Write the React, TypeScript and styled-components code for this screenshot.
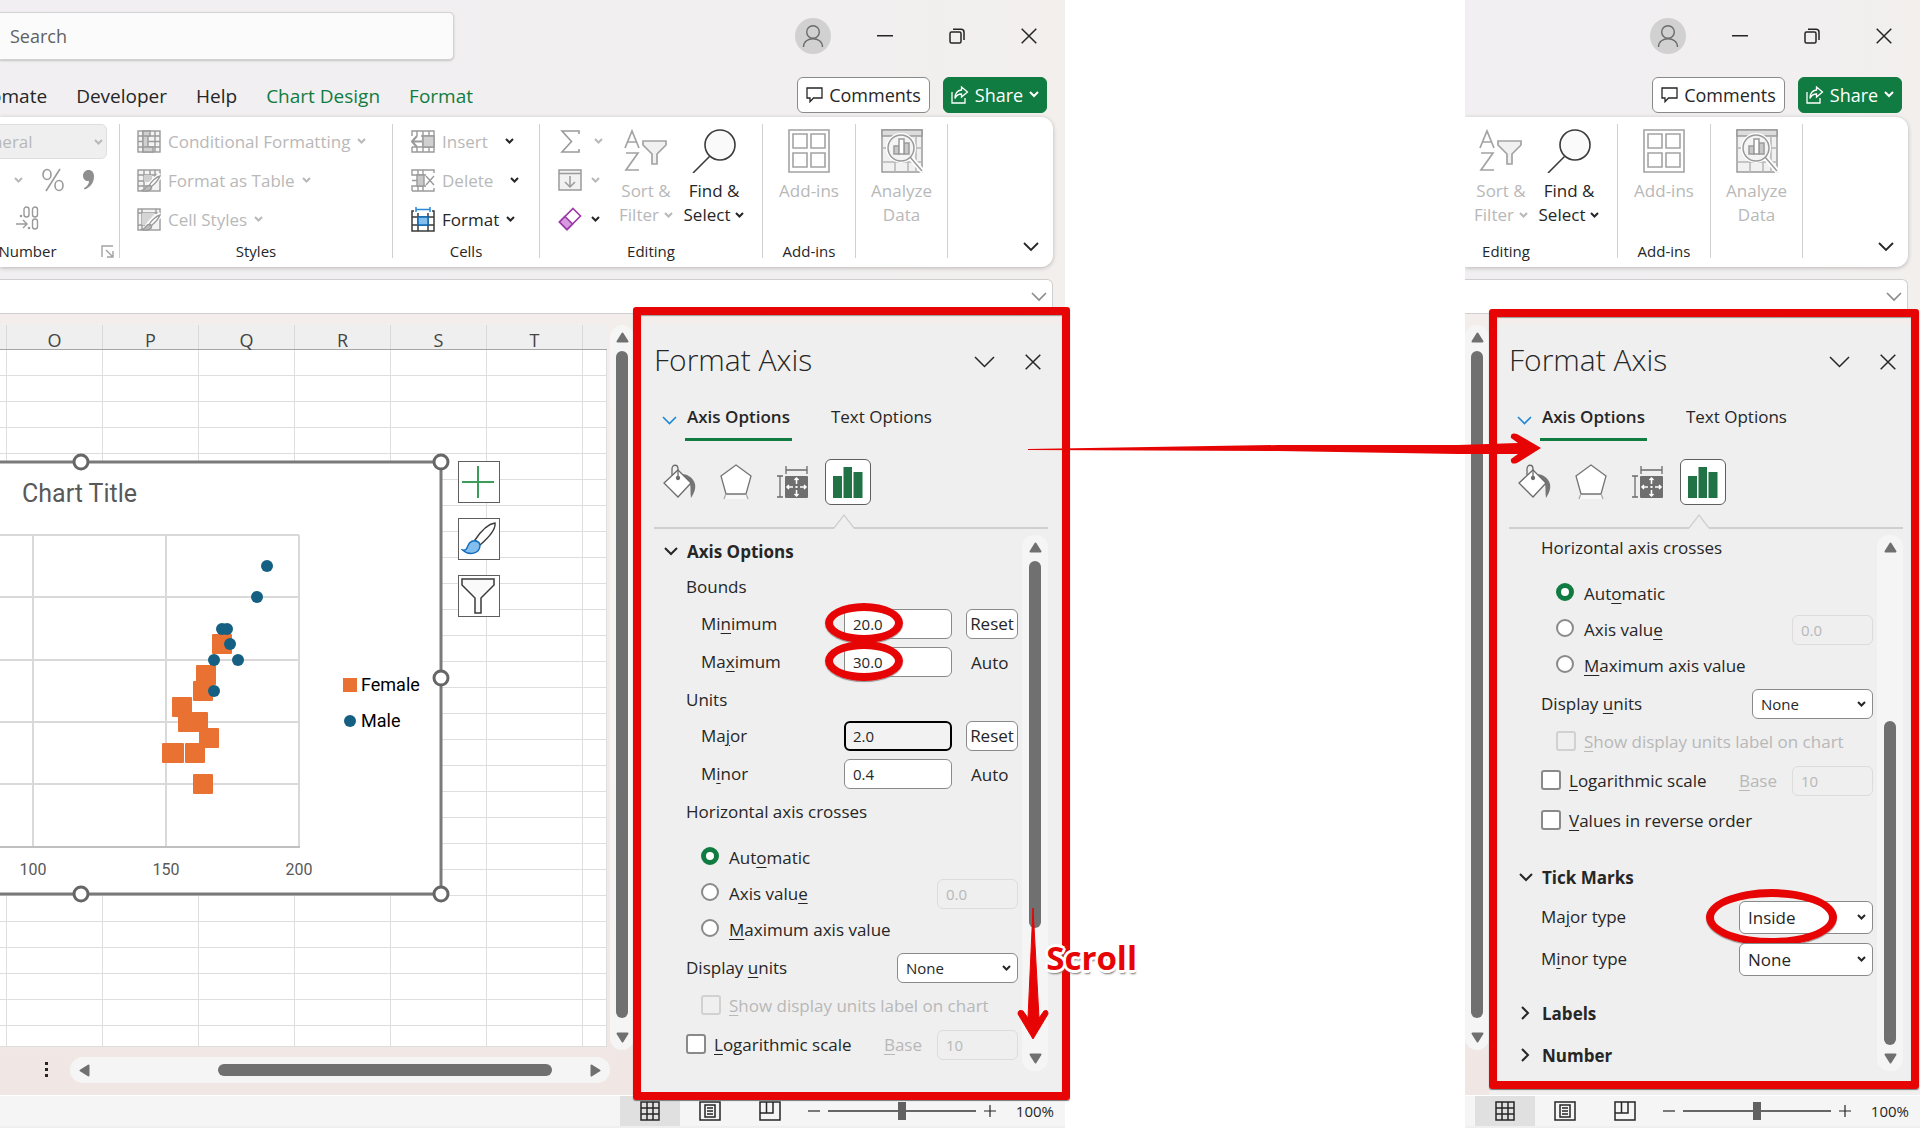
import React, { useId } from "react";
import styled, { createGlobalStyle, css } from "styled-components";

const UI_FONT = '"Open Sans", "Noto Sans", sans-serif';
const CHART_FONT = 'Roboto, "Open Sans", sans-serif';

const INK = "#262626";
const MUTED = "#b8b8b8";
const GREEN = "#107c41";
const RED = "#e60404";
const THUMB = "#707070";

const GlobalStyle = createGlobalStyle`
  * { box-sizing: border-box; }
  body {
    margin: 0;
    background: #fff;
    color: ${INK};
    font-family: ${UI_FONT};
    font-size: 17px;
  }
  button, input, select { font-family: inherit; color: inherit; }
  button { padding: 0; border: 0; background: none; }
  svg { display: block; flex: none; }
`;

/* ---------- page ---------- */

const Page = styled.main`
  position: relative;
  display: grid;
  grid-template-columns: 1065fr 400fr 455fr 3fr;
  min-height: 100vh;
  overflow: hidden;
`;

const WindowCell = styled.div<{ $col: number }>`
  grid-column: ${(p) => p.$col};
  position: relative;
  min-width: 0;
`;

const WindowBody = styled.section`
  display: flex;
  flex-direction: column;
  height: 100%;
  overflow: hidden;
  background: linear-gradient(90deg, #f1eff1 0%, #f1eff0 75%, #f2efed 100%);
`;

/* ---------- title bar ---------- */

const TitleBar = styled.header`
  display: flex;
  align-items: center;
  justify-content: space-between;
  height: 72px;
`;

const SearchBox = styled.input`
  flex: 0 0 454px;
  height: 48px;
  padding: 0 10px;
  font-size: 18px;
  background: #fbfbfb;
  border: 1px solid #d2d2d2;
  border-left: 0;
  border-radius: 0 5px 5px 0;
  box-shadow: 0 1px 2px #c4c4c4;
  &::placeholder { color: #616161; opacity: 1; }
`;

const WindowButtons = styled.div`
  display: flex;
  margin-left: auto;
`;

const WindowButton = styled.button`
  display: grid;
  place-items: center;
  width: 72px;
  height: 72px;
`;

/* ---------- tabs ---------- */

const TabRow = styled.div`
  display: flex;
  align-items: center;
  justify-content: space-between;
  height: 45px;
  padding-right: 18px;
`;

const Tabs = styled.nav`
  display: flex;
  justify-content: flex-end;
  gap: 29px;
  flex: 0 0 473px;
  padding-top: 2px;
  overflow: hidden;
`;

const TabLink = styled.a<{ $accent?: boolean }>`
  font-size: 19px;
  line-height: 28px;
  white-space: nowrap;
  text-decoration: none;
  color: ${(p) => (p.$accent ? GREEN : INK)};
`;

const TabActions = styled.div`
  display: flex;
  gap: 13px;
  margin-left: auto;
`;

const ActionButton = styled.button<{ $primary?: boolean }>`
  display: flex;
  align-items: center;
  justify-content: center;
  gap: 6px;
  width: ${(p) => (p.$primary ? 104 : 133)}px;
  height: 36px;
  font-size: 18px;
  color: ${(p) => (p.$primary ? "#fff" : INK)};
  background: ${(p) => (p.$primary ? GREEN : "#fff")};
  border: 1px solid ${(p) => (p.$primary ? GREEN : "#8a8a8a")};
  border-radius: 6px;
`;

/* ---------- ribbon ---------- */

const Ribbon = styled.div`
  position: relative;
  display: flex;
  justify-content: flex-end;
  height: 150px;
  margin-right: 12px;
  padding: 7px 105px 9px 0;
  background: #fff;
  border-radius: 0 12px 12px 0;
  box-shadow: 0 1px 4px #b9b5b3;
`;

const Group = styled.div<{ $w: number }>`
  position: relative;
  display: flex;
  flex-direction: column;
  flex: 0 0 ${(p) => p.$w}px;
  border-right: 1px solid #d1d1d1;
`;

const GroupBody = styled.div<{ $pad?: string }>`
  display: flex;
  flex: 1;
  padding: ${(p) => p.$pad ?? "0"};
`;

const GroupLabel = styled.div`
  font-size: 15px;
  line-height: 14px;
  height: 14px;
  text-align: center;
`;

const Stack = styled.div<{ $align?: string }>`
  display: flex;
  flex-direction: column;
  flex: 1;
  gap: 5px;
  align-items: ${(p) => p.$align ?? "stretch"};
`;

const RibbonRow = styled.div<{ $pad?: number; $gap?: number }>`
  display: flex;
  align-items: center;
  gap: ${(p) => p.$gap ?? 7}px;
  height: 34px;
  padding-right: ${(p) => p.$pad ?? 0}px;
`;

const Command = styled.button<{ $muted?: boolean; $gap?: number }>`
  display: flex;
  align-items: center;
  gap: ${(p) => p.$gap ?? 7}px;
  height: 34px;
  font-size: 17px;
  white-space: nowrap;
  color: ${(p) => (p.$muted ? MUTED : INK)};
`;

const BigCommand = styled.button<{ $muted?: boolean; $w: number }>`
  display: flex;
  flex-direction: column;
  align-items: center;
  flex: none;
  width: ${(p) => p.$w}px;
  padding-top: 5px;
  font-size: 17px;
  line-height: 24px;
  color: ${(p) => (p.$muted ? MUTED : INK)};
  & > svg { margin-bottom: 6px; }
`;

const CaptionLine = styled.span`
  display: flex;
  align-items: center;
  gap: 5px;
  white-space: nowrap;
`;

const FormatPicker = styled.div`
  position: relative;
  flex: none;
  width: 160px;
  color: ${MUTED};
  & > svg { position: absolute; right: 4px; top: 15px; }
`;

const FormatSelect = styled.select`
  display: block;
  width: 100%;
  height: 35px;
  padding: 0 0 0 22px;
  appearance: none;
  font-size: 17px;
  color: ${MUTED};
  opacity: 1;
  background: #efefef;
  border: 1px solid #dedede;
  border-radius: 6px;
`;

const Launcher = styled.button`
  position: absolute;
  right: 5px;
  bottom: 0;
`;

const CollapseButton = styled.button`
  position: absolute;
  right: 14px;
  bottom: 15px;
`;

const FormulaBar = styled.div`
  display: flex;
  align-items: center;
  height: 35px;
  margin: 12px 12px 0 0;
  padding-right: 5px;
  color: #8c8c8c;
  background: #fff;
  border: 1px solid #cfcfcf;
  border-left: 0;
  border-radius: 0 6px 0 0;
`;

const FormulaInput = styled.input`
  flex: 1;
  min-width: 0;
  border: 0;
  background: none;
`;

/* ---------- sheet ---------- */

const Workspace = styled.div`
  display: flex;
  flex: 1;
  min-height: 0;
  padding-top: 11px;
  background: linear-gradient(#f3eeeb 0, #f0e7e5 100%);
`;

const SheetArea = styled.div`
  display: flex;
  flex-direction: column;
  flex: 1;
  min-width: 0;
`;

const SheetTop = styled.div`
  display: flex;
  flex: 1;
  min-height: 0;
`;

const Sheet = styled.div`
  display: flex;
  flex-direction: column;
  flex: 1;
  min-width: 0;
  margin: 0 3px 3px 0;
  overflow: hidden;
`;

const ColumnHeads = styled.div`
  display: flex;
  height: 25px;
  padding-left: 6px;
  background: #efefef;
  border-bottom: 1px solid #a6a6a6;
`;

const ColumnHead = styled.div`
  flex: 0 0 96px;
  border-left: 1px solid #d9d9d9;
  color: #444;
  font-size: 18px;
  line-height: 30px;
  text-align: center;
`;

const Cells = styled.div`
  position: relative;
  flex: 1;
  border: solid #dedede;
  border-width: 0 1px 1px 0;
  background-color: #fff;
  background-image: linear-gradient(90deg, #dedede 1px, transparent 1px),
    linear-gradient(transparent 25px, #dedede 25px);
  background-size: 96px 26px;
  background-position: 6px 0;
`;

const ChartFloat = styled.div`
  position: absolute;
  left: 0;
  top: 103px;
`;

const ChartTools = styled.div`
  position: absolute;
  left: 458px;
  top: 111px;
  display: flex;
  flex-direction: column;
  gap: 15px;
`;

const ChartTool = styled.button`
  display: grid;
  place-items: center;
  width: 42px;
  height: 42px;
  background: #fff;
  border: 1px solid #5e5e5e;
`;

const VTrack = styled.div<{ $w: number; $inset?: boolean }>`
  display: flex;
  flex-direction: column;
  align-items: center;
  flex: 0 0 ${(p) => p.$w}px;
  margin: ${(p) => (p.$inset ? "6px 0" : "0")};
  padding: 7px 0;
  gap: 8px;
  background: #f5f5f5;
  border-radius: 12px;
`;

const VRail = styled.div<{ $before: number; $after: number }>`
  display: flex;
  flex: 1;
  width: 12px;
  padding: ${(p) => p.$before}px 0 ${(p) => p.$after}px;
`;

const Thumb = styled.div`
  flex: 1;
  border-radius: 6px;
  background: ${THUMB};
`;

const SheetBottom = styled.div`
  display: flex;
  align-items: flex-start;
  height: 45px;
  padding-top: 7px;
`;

const HTrack = styled.div`
  display: flex;
  align-items: center;
  flex: 1;
  height: 26px;
  margin: 0 24px 0 18px;
  padding: 0 8px;
  background: #f5f5f5;
  border-radius: 13px;
`;

const HRail = styled.div`
  display: flex;
  flex: 1;
  height: 12px;
  padding: 0 37px 0 127px;
`;

const MoreButton = styled.button`
  margin: 5px 0 0 42px;
  padding: 0 3px;
`;

/* ---------- status bar ---------- */

const StatusBar = styled.footer`
  display: flex;
  justify-content: flex-end;
  align-items: center;
  height: 33px;
  padding-right: 11px;
  background: #f5f5f5;
  border-top: 1px solid #fff;
  border-bottom: 2px solid #f1eeee;
`;

const ViewButton = styled.button<{ $active?: boolean }>`
  display: grid;
  place-items: center;
  flex: none;
  width: 60px;
  height: 30px;
  background: ${(p) => (p.$active ? "#e0e0e0" : "transparent")};
`;

const ZoomButton = styled.button`
  margin: 0 8px;
`;

const ZoomSlider = styled.input`
  width: 148px;
  height: 18px;
  margin: 0;
  appearance: none;
  background: linear-gradient(#666, #666) center / 100% 2px no-repeat;
  &::-webkit-slider-thumb {
    appearance: none;
    width: 8px;
    height: 18px;
    background: #616161;
  }
`;

const ZoomValue = styled.span`
  width: 50px;
  text-align: right;
  font-size: 15px;
`;

/* ---------- format pane ---------- */

const Pane = styled.aside`
  display: flex;
  flex-direction: column;
  flex: 0 0 431px;
  background: #efefef;
  padding: 0 17px 18px 20px;
`;

const PaneHeader = styled.div`
  display: flex;
  align-items: center;
  height: 70px;
  margin-right: -2px;
`;

const PaneTitle = styled.h2`
  flex: 1;
  margin: 0;
  font-size: 30px;
  font-weight: 300;
  line-height: 40px;
`;

const PaneHeadButton = styled.button`
  display: grid;
  place-items: center;
  width: 34px;
  height: 34px;
  margin: 4px 0 0 15px;
`;

const PaneTabs = styled.div`
  display: flex;
  align-items: center;
  height: 46px;
  padding-left: 8px;
  color: #1e88d6;
  & > svg { margin-top: 6px; }
`;

const PaneTab = styled.button<{ $active?: boolean }>`
  height: 46px;
  margin-left: ${(p) => (p.$active ? 8 : 37)}px;
  padding: 0 2px;
  font-size: 17px;
  font-weight: ${(p) => (p.$active ? 600 : 400)};
  color: ${INK};
  border-bottom: 3px solid ${(p) => (p.$active ? GREEN : "transparent")};
`;

const PaneIcons = styled.div`
  display: flex;
  gap: 10px;
  height: 86px;
  padding: 18px 0 0 3px;
`;

const PaneIcon = styled.button<{ $active?: boolean }>`
  display: grid;
  place-items: center;
  width: 46px;
  height: 46px;
  border: 1px solid ${(p) => (p.$active ? "#5e5e5e" : "transparent")};
  border-radius: 6px;
  background: ${(p) => (p.$active ? "#fff" : "none")};
`;

const Notch = styled.div`
  display: flex;
  height: 2px;
  align-items: flex-end;
  color: #cfcfcf;
  &::before, &::after { content: ""; height: 2px; background: #cfcfcf; }
  &::before { flex: 0 0 180px; }
  &::after { flex: 1; }
`;

const PaneScroll = styled.div`
  display: flex;
  flex: 1;
  min-height: 0;
`;

const Options = styled.form<{ $top: number }>`
  flex: 1;
  min-width: 0;
  padding: ${(p) => p.$top}px 4px 0 0;
`;

const Row = styled.div<{ $h?: number; $indent?: number; $top?: number; $muted?: boolean }>`
  display: flex;
  align-items: center;
  height: ${(p) => p.$h ?? 38}px;
  margin-top: ${(p) => p.$top ?? 0}px;
  padding-left: ${(p) => p.$indent ?? 32}px;
  color: ${(p) => (p.$muted ? MUTED : INK)};
`;

const Label = styled.label`
  flex: 1;
  line-height: 24px;
  white-space: nowrap;
  u { text-underline-offset: 3px; text-decoration-thickness: 1px; }
`;

const SectionButton = styled.button`
  display: flex;
  align-items: center;
  gap: 8px;
  font-size: 17px;
  font-weight: 700;
  & > span { width: 17px; display: grid; place-items: center; }
`;

const boxLook = css<{ disabled?: boolean }>`
  height: 30px;
  border: 1px solid ${(p) => (p.disabled ? "#dcdcdc" : "#8a8a8a")};
  border-radius: 6px;
  background: ${(p) => (p.disabled ? "transparent" : "#fff")};
  color: ${(p) => (p.disabled ? MUTED : INK)};
  opacity: 1;
`;

const Field = styled.div<{ $w: number }>`
  position: relative;
  flex: 0 0 ${(p) => p.$w}px;
  color: ${INK};
  & > svg { position: absolute; right: 7px; top: 50%; margin-top: -3px; }
`;

const TextInput = styled.input<{ $focused?: boolean }>`
  ${boxLook}
  display: block;
  width: 100%;
  padding: 0 8px;
  font-size: 15px;
  ${(p) => p.$focused && css`border: 2px solid #000; padding: 0 7px; background: #f3f2f2;`}
`;

const Select = styled.select<{ $large?: boolean }>`
  ${boxLook}
  display: block;
  width: 100%;
  height: ${(p) => (p.$large ? 33 : 30)}px;
  padding: 0 8px;
  appearance: none;
  font-size: ${(p) => (p.$large ? 17 : 15)}px;
`;

const Side = styled.div`
  flex: 0 0 52px;
  margin-left: 14px;
  padding-left: 5px;
`;

const ResetButton = styled.button`
  ${boxLook}
  flex: 0 0 52px;
  margin-left: 14px;
  font-size: 17px;
  line-height: 24px;
`;

const Radio = styled.input`
  appearance: none;
  flex: none;
  width: 18px;
  height: 18px;
  margin: 0 10px 4px 0;
  border: 2px solid #8a8a8a;
  border-radius: 50%;
  background: #fff;
  &:checked { border: 5px solid ${GREEN}; }
`;

const Check = styled.input`
  appearance: none;
  flex: none;
  width: 20px;
  height: 20px;
  margin: 0 8px 2px 0;
  border: 2px solid ${(p) => (p.disabled ? "#d1d1d1" : "#8a8a8a")};
  border-radius: 3px;
  background: ${(p) => (p.disabled ? "transparent" : "#fff")};
`;

/* ---------- annotations ---------- */

const Frame = styled.div<{ $tall?: boolean }>`
  position: absolute;
  right: ${(p) => (p.$tall ? -5 : 1)}px;
  width: ${(p) => (p.$tall ? 437 : 430)}px;
  top: ${(p) => (p.$tall ? 307 : 309)}px;
  bottom: ${(p) => (p.$tall ? 28 : 39)}px;
  border: 8px solid ${RED};
  border-radius: 3px;
  box-shadow: 0 1px 1px #777, inset 0 1px 1px #999;
  pointer-events: none;
`;

const Ring = styled.div<{ $wide?: boolean }>`
  position: absolute;
  left: ${(p) => (p.$wide ? -33 : -19)}px;
  top: ${(p) => (p.$wide ? -12 : -6)}px;
  width: ${(p) => (p.$wide ? 131 : 78)}px;
  height: ${(p) => (p.$wide ? 57 : 40)}px;
  border: 8px solid ${RED};
  border-radius: 50%;
  box-shadow: 0 1px 1px #888;
  pointer-events: none;
`;

const LongArrow = styled.svg`
  position: absolute;
  left: 1028px;
  top: 432px;
`;

const DownArrow = styled.svg`
  position: absolute;
  right: 16px;
  top: 908px;
`;

const ScrollNote = styled.div`
  position: absolute;
  right: -72px;
  top: 936px;
  font-size: 33px;
  line-height: 44px;
  font-weight: 700;
  color: ${RED};
  text-shadow: -2px -2px 0 #fff, 2px -2px 0 #fff, -2px 2px 0 #fff, 2px 2px 0 #fff,
    0 3px 0 #fff, 3px 0 0 #fff, -3px 0 0 #fff, 0 -3px 0 #fff, 1px 4px 2px #777;
`;

/* ---------- icons ---------- */

type ChevronProps = { w?: number; color?: string; thick?: number };
const Chevron = ({ w = 9, color = "currentColor", thick = 2 }: ChevronProps) => (
  <svg width={w} height={w / 2 + 2} viewBox={`0 0 ${w} ${w / 2 + 2}`} fill="none" stroke={color} strokeWidth={thick}>
    <path d={`M1 1 L${w / 2} ${w / 2} L${w - 1} 1`} />
  </svg>
);

const ChevronRight = () => (
  <svg width="9" height="14" fill="none" stroke={INK} strokeWidth="2">
    <path d="M1 1l6 6-6 6" />
  </svg>
);

const Cross = () => (
  <svg width="16" height="16" fill="none" stroke={INK} strokeWidth="1.5">
    <path d="M.7.7l14.6 14.6M15.3.7L.7 15.3" />
  </svg>
);

const Triangle = ({ dir }: { dir: "up" | "down" | "left" | "right" }) => {
  const turn = { up: 0, right: 90, down: 180, left: 270 }[dir];
  return (
    <svg width="13" height="11" viewBox="-6.5 -5.5 13 11" overflow="visible">
      <path d="M0-4L5 4H-5Z" fill={THUMB} stroke={THUMB} strokeWidth="2" strokeLinejoin="round" transform={`rotate(${turn})`} />
    </svg>
  );
};

const Avatar = () => (
  <svg width="36" height="36" fill="none" stroke="#6b6b6b" strokeWidth="1.4">
    <circle cx="18" cy="18" r="18" fill="#d1d1d1" stroke="none" />
    <circle cx="18" cy="14" r="6.3" />
    <path d="M8.500 29c0-11 19-11 19 0" />
  </svg>
);

const Restore = () => (
  <svg width="16" height="16" fill="none" stroke={INK} strokeWidth="1.5">
    <rect x="1" y="4" width="11" height="11" rx="1.500" />
    <path d="M4 1.300h8a3 3 0 013 3V12" />
  </svg>
);

const CommentIcon = () => (
  <svg width="17" height="16" fill="none" stroke={INK} strokeWidth="1.3">
    <path d="M1 1h15v10H7.500L4 14.700V11H1z" />
  </svg>
);

const ShareIcon = () => (
  <svg width="18" height="18" fill="none" stroke="#fff" strokeWidth="1.3">
    <path d="M1 6v11h13v-5M10.500 1l6 5-6 5V8C7 8 5 10 4 12.500 4 8 6 4.500 10.500 4z" />
  </svg>
);

const TableIcon = ({ kind }: { kind: "cond" | "table" | "cell" }) => (
  <svg width="24" height="23" fill="none" stroke="#9a9a9a" strokeWidth="1.400">
    <rect x="1" y="1" width="22" height="21" fill="#f3f3f3" />
    {kind === "cond" && (
      <>
        <path d="M1 6h22M1 11.500h22M1 17h22M6 1v21M18 1v21" />
        <path d="M6 1h7v5H6zM6 6h5v11H6zM6 17h10v5H6z" fill="#cfcfcf" />
      </>
    )}
    {kind === "table" && <path d="M1 6h22M1 12h14M1 17h10M7 1v21M13 1v14M18 1v9" />}
    {kind === "table" && <path d="M7 6h8v7H7z" fill="#cfcfcf" stroke="none" />}
    {kind === "cell" && (
      <>
        <path d="M1 5h22M5 1v21M1 17h7M19 1v5" />
        <path d="M5 5h13L8 17H5z" fill="#d5d5d5" stroke="none" />
      </>
    )}
    {kind !== "cond" && (
      <>
        <path d="M24 6L12 17" stroke="#fff" strokeWidth="6" />
        <path d="M23 7c-4 1-9 6-10.500 9l2 1.500C17.500 15 21.500 11 23 7z" fill="#fff" />
        <path d="M12 16.500c-3 0-3 4-7 5 4 1.500 10 0 9.500-3.500z" fill="#bdbdbd" />
      </>
    )}
  </svg>
);

const CellsIcon = ({ kind }: { kind: "insert" | "delete" | "format" }) => {
  if (kind === "format")
    return (
      <svg width="24" height="25" fill="none" stroke="#3b3b3b" strokeWidth="1.500">
        <path d="M3 4H1v20h22V4h-2M1 10h22M1 18h22M7 6v18M17 6v18" />
        <rect x="7" y="10" width="10" height="8" fill="#83beec" stroke="#0f6cbd" />
        <path d="M5 2.500h14M5 0v5M19 0v5" stroke="#2b88d8" />
      </svg>
    );
  return (
    <svg width="24" height="23" fill="none" stroke="#9a9a9a" strokeWidth="1.400">
      {kind === "insert" ? (
        <>
          <path d="M1 6V1h22v21H1v-5M6 1v5M12 1v21M18 1v21M10 6h13M10 17h13M6 17v5M1 17h11" />
          <path d="M12 6h11v11H12z" fill="#d0d0d0" />
          <path d="M11 11.500H1M6 6l-5 5.500L6 17" strokeWidth="2" />
        </>
      ) : (
        <>
          <path d="M23 4V1H1v5h14M1 22h22v-3M1 22v-5h14M7 1v5M12 1v5M7 17v5M12 17v5M1 11.500h5" />
          <path d="M6 6h7v11H6z" fill="#c8c8c8" />
          <path d="M15 7l8 9M23 7l-8 9" />
        </>
      )}
    </svg>
  );
};

const Sigma = () => (
  <svg width="24" height="23" fill="none" stroke="#9a9a9a" strokeWidth="1.600">
    <path d="M21 4V1H4l9.500 10.500L4 22h17v-3" />
  </svg>
);

const FillIcon = () => (
  <svg width="24" height="22" fill="none" stroke="#9a9a9a" strokeWidth="1.500">
    <path d="M1 1h22v20H1z" fill="#f1f1f1" />
    <path d="M1 4.500h22M12 7v11M7 13l5 5 5-5" />
  </svg>
);

const Eraser = () => (
  <svg width="24" height="24" fill="none" stroke="#9b37a8" strokeWidth="1.600">
    <path d="M15 1.500l7.500 7.500L9 22.500 1.500 15z" fill="#fff" />
    <path d="M7 9.500L14.500 17 9 22.500 1.500 15z" fill="#d59bdc" />
  </svg>
);

const SortFilter = () => (
  <svg width="44" height="44" fill="none" stroke="#a3a3a3" strokeWidth="1.700">
    <path d="M1 19L8 2l7 17M3.500 13h9M2 24h12L2 41h13" />
    <path d="M19 12h23v4l-9 9v10h-5V25l-9-9z" fill="#f1f1f1" />
  </svg>
);

const FindIcon = () => (
  <svg width="44" height="44" fill="none" stroke="#3b3b3b" strokeWidth="1.600">
    <circle cx="28" cy="16" r="15" fill="#fafafa" />
    <path d="M17.500 27.500L1 44" />
  </svg>
);

const AddInsIcon = () => (
  <svg width="44" height="44" fill="none" stroke="#a3a3a3" strokeWidth="1.600">
    <path d="M2 1h40v42H2z" />
    <path d="M6 5h14v14H6zM24 5h14v14H24zM6 24h14v14H6zM24 24h14v14H24z" />
  </svg>
);

const AnalyzeIcon = () => (
  <svg width="44" height="44" fill="none" stroke="#9a9a9a" strokeWidth="1.500">
    <path d="M2 1h40v42H2z" fill="#f1f1f1" />
    <path d="M2 1h40v6H2z" fill="#dcdcdc" />
    <path d="M2 19h40M2 33h40M15 33v10M28 33v10M36 7v36" stroke="#b5b5b5" />
    <path d="M30 28l13 15" stroke="#fff" strokeWidth="5" />
    <circle cx="21" cy="19" r="15" fill="#fff" stroke="none" />
    <circle cx="21" cy="19" r="13" fill="#f4f4f4" />
    <path d="M30 28l12 14" />
    <path d="M14 17h5v8h-5zM24 14h5v11h-5z" fill="#c8c8c8" />
    <path d="M19 10h5v15h-5z" fill="#fff" />
  </svg>
);

const DecimalIcon = () => (
  <svg width="24" height="26" fill="none" stroke="#9a9a9a" strokeWidth="1.400">
    <path d="M1 18h11M8 14l4 4-4 4" />
    <circle cx="6" cy="10" r=".6" />
    <circle cx="14" cy="22" r=".6" />
    <rect x="9" y="1" width="5" height="10" rx="2.500" />
    <rect x="17.500" y="1" width="5" height="10" rx="2.500" />
    <rect x="17.500" y="13" width="5" height="10" rx="2.500" />
  </svg>
);

const PercentIcon = () => (
  <svg width="24" height="24" fill="none" stroke="#9a9a9a" strokeWidth="1.600">
    <ellipse cx="6" cy="6.500" rx="4" ry="5" />
    <ellipse cx="18" cy="17.500" rx="4" ry="5" />
    <path d="M19 1L5 23" />
  </svg>
);

const CommaIcon = () => (
  <svg width="12" height="20" fill="#8f8f8f">
    <path d="M5.500 0C9 0 11 2.500 11 6.500 11 13 7 17.500 1.500 19.500L1 18c3-1.600 5-4 5-7C2.500 11.500 0 9 0 5.500 0 2.500 2.500 0 5.500 0z" />
  </svg>
);

const LauncherIcon = () => (
  <svg width="13" height="13" fill="none" stroke="#a3a3a3" strokeWidth="1.400">
    <path d="M1 12V1h11M5 5l7 7M12 6v6H6" />
  </svg>
);

const PlusIcon = () => (
  <svg width="34" height="34" stroke="#3c9c5c" strokeWidth="2">
    <path d="M16 1v32M0 17h32" />
  </svg>
);

const BrushIcon = () => (
  <svg width="36" height="34" fill="none" stroke="#3b3b3b" strokeWidth="1.400">
    <path d="M14 18C20 9 27 2 34 1c1 6-7 15-15 22z" fill="#fff" />
    <path d="M19 23c0 9-11 11-17.500 5 5 1 4-3 7-7 4-4 10-2 10.500 2z" fill="#83beec" stroke="#0f6cbd" />
  </svg>
);

const FunnelIcon = () => (
  <svg width="36" height="36" fill="#fafafa" stroke="#3b3b3b" strokeWidth="1.500">
    <path d="M1 1h32v6L20 20v15h-6V20L1 7z" />
  </svg>
);

const BucketIcon = () => (
  <svg width="34" height="36" fill="none" stroke="#6b6b6b" strokeWidth="1.300">
    <path d="M18 10c6 0 12 3 14 10 1 5-1 9-4 14-1-6 0-10-1-14z" fill="#757575" stroke="none" />
    <path d="M15 6l13 13-13 14L1 19z" fill="#fff" />
    <path d="M9 11V5c0-5 6-5 6 0v9" />
    <circle cx="15" cy="14" r="1.500" fill="#6b6b6b" />
  </svg>
);

const PentagonIcon = () => (
  <svg width="32" height="36" fill="none" stroke="#757575" strokeWidth="1.300">
    <path d="M16 1l15 11-5 18H6L1 12z" fill="#fff" />
    <path d="M6 31h20l2 4H4z" fill="#f8f8f8" stroke="none" />
    <path d="M5.500 31L4 35M26.500 31l1.500 4" stroke="#aaa" />
  </svg>
);

const SizeIcon = () => (
  <svg width="32" height="33" fill="none" stroke="#6b6b6b" strokeWidth="1.300">
    <path d="M10 4h21M10 0v8M31 0v8M4 10v21M1 10h6M1 31h6" />
    <rect x="9" y="10" width="23" height="22" rx="1" fill="#6f6f6f" stroke="none" />
    <path d="M20.500 12v6M20.500 24v6M11 21h6M24 21h6M18.500 14l2-2 2 2M18.500 28l2 2 2-2M13 19l-2 2 2 2M28 19l2 2-2 2" stroke="#fff" strokeWidth="1.500" />
    <path d="M19.500 20h2v2h-2z" fill="#fff" stroke="none" />
  </svg>
);

const BarsIcon = () => (
  <svg width="30" height="31" fill="#217346">
    <path d="M0 9h9v22H0zM10.500 0H19v31h-8.500zM20.500 5h9v26h-9z" />
  </svg>
);

const NotchMark = () => (
  <svg width="20" height="15" fill="#efefef" stroke="#cfcfcf" strokeWidth="1.300">
    <path d="M0 14L10 1l10 13" />
  </svg>
);

const GridView = () => (
  <svg width="20" height="20" fill="none" stroke={INK} strokeWidth="1.500">
    <path d="M1 1h18v18H1zM1 7h18M1 13h18M7 1v18M13 1v18" />
  </svg>
);

const PageView = () => (
  <svg width="22" height="20" fill="none" stroke={INK} strokeWidth="1.500">
    <path d="M1 1h20v18H1zM6 4h10v12H6zM8 7h6M8 10h6M8 13h6" />
  </svg>
);

const BreakView = () => (
  <svg width="22" height="20" fill="none" stroke={INK} strokeWidth="1.500">
    <path d="M1 1h20v18H1zM1 12h13V1M7.500 1v11" />
  </svg>
);

/* ---------- chart ---------- */

const FEMALE = [
  [222, 644], [206, 675], [203, 691], [182, 707], [188, 722], [198, 722],
  [209, 738], [172, 753], [174, 753], [195, 753], [203, 784],
];
const MALE = [
  [267, 566], [257, 597], [222, 629], [227, 629], [230, 644], [214, 660], [238, 660], [214, 691],
];
const HANDLES = [[81, 462], [441, 462], [441, 678], [441, 894], [81, 894]];
const TICKS = [[33, "100"], [166, "150"], [299, "200"]] as const;

const ScatterChart = () => (
  <svg width="452" height="452" viewBox="0 453 452 452" fontFamily={CHART_FONT}>
    <rect x="-10" y="462" width="451" height="432" fill="#fff" stroke="#7a7a7a" strokeWidth="3" />
    <text x="22" y="502" fontSize="25" fill="#595959">Chart Title</text>
    <g stroke="#d9d9d9" strokeWidth="2">
      {[535, 597, 660, 722, 784].map((y) => <path key={y} d={`M0 ${y}H299`} />)}
      {[33, 166, 299].map((x) => <path key={x} d={`M${x} 535V847`} />)}
      <path d="M0 847H300" stroke="#bfbfbf" />
    </g>
    {FEMALE.map(([x, y]) => (
      <rect key={`${x}-${y}`} x={x - 10} y={y - 10} width="20" height="20" rx="1" fill="#e97132" />
    ))}
    {MALE.map(([x, y]) => <circle key={`${x}-${y}`} cx={x} cy={y} r="6" fill="#156082" />)}
    {TICKS.map(([x, t]) => (
      <text key={t} x={x} y="875" fontSize="16" fill="#595959" textAnchor="middle">{t}</text>
    ))}
    <rect x="343" y="678" width="14" height="14" fill="#e97132" />
    <circle cx="350" cy="721" r="6" fill="#156082" />
    <text x="361" y="691" fontSize="18" fill="#000">Female</text>
    <text x="361" y="727" fontSize="18" fill="#000">Male</text>
    {HANDLES.map(([x, y]) => (
      <circle key={`${x}-${y}`} cx={x} cy={y} r="7" fill="#fff" stroke="#666" strokeWidth="3" />
    ))}
  </svg>
);

/* ---------- pane rows ---------- */

const ValueRow = ({ name, value, reset, ringed, focused }: {
  name: React.ReactNode; value: string; reset?: boolean; ringed?: boolean; focused?: boolean;
}) => {
  const id = useId();
  return (
    <Row $indent={47}>
      <Label htmlFor={id}>{name}</Label>
      <Field $w={108}>
        <TextInput id={id} defaultValue={value} $focused={focused} />
        {ringed && <Ring />}
      </Field>
      {reset ? <ResetButton type="button">Reset</ResetButton> : <Side>Auto</Side>}
    </Row>
  );
};

const SelectRow = ({ name, value, large, ringed }: {
  name: React.ReactNode; value: string; large?: boolean; ringed?: boolean;
}) => {
  const id = useId();
  return (
    <Row $h={large ? 42 : 40}>
      <Label htmlFor={id}>{name}</Label>
      <Field $w={large ? 134 : 121}>
        <Select id={id} $large={large} defaultValue={value}><option>{value}</option></Select>
        <Chevron />
        {ringed && <Ring $wide />}
      </Field>
    </Row>
  );
};

const Section = ({ title, open, h, top }: { title: string; open?: boolean; h: number; top?: number }) => (
  <Row $h={h} $indent={8} $top={top}>
    <SectionButton type="button">
      <span>{open ? <Chevron w={14} /> : <ChevronRight />}</span>
      {title}
    </SectionButton>
  </Row>
);

const BaseLabel = styled(Label)`
  flex: none;
  margin-right: 15px;
  color: ${MUTED};
`;

const CrossesOptions = () => {
  const id = useId();
  return (
    <>
      <Row $h={36}>Horizontal axis crosses</Row>
      <Row $h={36} $indent={47} $top={11}>
        <Radio type="radio" name={id} id={`${id}a`} defaultChecked />
        <Label htmlFor={`${id}a`}>Aut<u>o</u>matic</Label>
      </Row>
      <Row $h={36} $indent={47}>
        <Radio type="radio" name={id} id={`${id}b`} />
        <Label htmlFor={`${id}b`}>Axis valu<u>e</u></Label>
        <Field $w={81}><TextInput aria-label="Axis value" defaultValue="0.0" disabled /></Field>
      </Row>
      <Row $h={36} $indent={47}>
        <Radio type="radio" name={id} id={`${id}c`} />
        <Label htmlFor={`${id}c`}><u>M</u>aximum axis value</Label>
      </Row>
      <SelectRow name={<>Display <u>u</u>nits</>} value="None" />
      <Row $h={36} $indent={47} $muted>
        <Check type="checkbox" id={`${id}d`} disabled />
        <Label htmlFor={`${id}d`}><u>S</u>how display units label on chart</Label>
      </Row>
      <Row $h={42}>
        <Check type="checkbox" id={`${id}e`} />
        <Label htmlFor={`${id}e`}><u>L</u>ogarithmic scale</Label>
        <BaseLabel htmlFor={`${id}f`}><u>B</u>ase</BaseLabel>
        <Field $w={81}><TextInput id={`${id}f`} defaultValue="10" disabled /></Field>
      </Row>
    </>
  );
};

type View = "bounds" | "ticks";

const FormatPane = ({ view }: { view: View }) => {
  const id = useId();
  const bounds = view === "bounds";
  return (
    <Pane>
      <PaneHeader>
        <PaneTitle>Format Axis</PaneTitle>
        <PaneHeadButton aria-label="Pane options"><Chevron w={21} thick={1.5} /></PaneHeadButton>
        <PaneHeadButton aria-label="Close pane"><Cross /></PaneHeadButton>
      </PaneHeader>
      <PaneTabs>
        <Chevron w={15} thick={1.6} />
        <PaneTab $active>Axis Options</PaneTab>
        <PaneTab>Text Options</PaneTab>
      </PaneTabs>
      <PaneIcons>
        <PaneIcon aria-label="Fill and line"><BucketIcon /></PaneIcon>
        <PaneIcon aria-label="Effects"><PentagonIcon /></PaneIcon>
        <PaneIcon aria-label="Size and properties"><SizeIcon /></PaneIcon>
        <PaneIcon aria-label="Axis options" $active><BarsIcon /></PaneIcon>
      </PaneIcons>
      <Notch><NotchMark /></Notch>
      <PaneScroll>
        <Options $top={bounds ? 6 : 0}>
          {bounds ? (
            <>
              <Section title="Axis Options" open h={32} />
              <Row>Bounds</Row>
              <ValueRow name={<>Mi<u>n</u>imum</>} value="20.0" reset ringed />
              <ValueRow name={<>Ma<u>x</u>imum</>} value="30.0" ringed />
              <Row $h={36}>Units</Row>
              <ValueRow name={<>Ma<u>j</u>or</>} value="2.0" reset focused />
              <ValueRow name={<>M<u>i</u>nor</>} value="0.4" />
              <CrossesOptions />
            </>
          ) : (
            <>
              <CrossesOptions />
              <Row $h={38}>
                <Check type="checkbox" id={id} />
                <Label htmlFor={id}><u>V</u>alues in reverse order</Label>
              </Row>
              <Section title="Tick Marks" open h={38} top={18} />
              <SelectRow name={<>Ma<u>j</u>or type</>} value="Inside" large ringed />
              <SelectRow name={<>M<u>i</u>nor type</>} value="None" large />
              <Section title="Labels" h={42} top={12} />
              <Section title="Number" h={42} />
            </>
          )}
        </Options>
        <VTrack $w={26} $inset>
          <Triangle dir="up" />
          <VRail $before={bounds ? 0 : 160} $after={bounds ? 117 : 0}><Thumb /></VRail>
          <Triangle dir="down" />
        </VTrack>
      </PaneScroll>
    </Pane>
  );
};

/* ---------- window ---------- */

const ExcelWindow = ({ view }: { view: View }) => {
  const full = view === "bounds";
  return (
    <WindowBody>
      <TitleBar>
        {full && <SearchBox type="search" placeholder="Search" aria-label="Search" />}
        <WindowButtons>
          <WindowButton aria-label="Account"><Avatar /></WindowButton>
          <WindowButton aria-label="Minimize">
            <svg width="16" height="2"><path d="M0 0h16v1.500H0z" fill={INK} /></svg>
          </WindowButton>
          <WindowButton aria-label="Restore"><Restore /></WindowButton>
          <WindowButton aria-label="Close"><Cross /></WindowButton>
        </WindowButtons>
      </TitleBar>
      <TabRow>
        {full && (
          <Tabs>
            <TabLink href="#automate">Automate</TabLink>
            <TabLink href="#developer">Developer</TabLink>
            <TabLink href="#help">Help</TabLink>
            <TabLink href="#design" $accent>Chart Design</TabLink>
            <TabLink href="#format" $accent>Format</TabLink>
          </Tabs>
        )}
        <TabActions>
          <ActionButton><CommentIcon />Comments</ActionButton>
          <ActionButton $primary><ShareIcon />Share<Chevron w={10} /></ActionButton>
        </TabActions>
      </TabRow>
      <Ribbon>
        {full && (
          <>
            <Group $w={184}>
              <GroupBody>
                <Stack $align="flex-end">
                  <RibbonRow $pad={12}>
                    <FormatPicker>
                      <FormatSelect aria-label="Number format" disabled><option>General</option></FormatSelect>
                      <Chevron />
                    </FormatPicker>
                  </RibbonRow>
                  <RibbonRow $pad={24} $gap={18}>
                    <Command $muted aria-label="Accounting format"><Chevron /></Command>
                    <Command $muted aria-label="Percent style"><PercentIcon /></Command>
                    <Command $muted aria-label="Comma style"><CommaIcon /></Command>
                  </RibbonRow>
                  <RibbonRow $pad={80}>
                    <Command $muted aria-label="Decrease decimal"><DecimalIcon /></Command>
                  </RibbonRow>
                </Stack>
              </GroupBody>
              <GroupLabel>Number</GroupLabel>
              <Launcher aria-label="Number settings"><LauncherIcon /></Launcher>
            </Group>
            <Group $w={273}>
              <GroupBody $pad="0 0 0 17px">
                <Stack>
                  <RibbonRow><Command $muted><TableIcon kind="cond" />Conditional Formatting<Chevron /></Command></RibbonRow>
                  <RibbonRow><Command $muted><TableIcon kind="table" />Format as Table<Chevron /></Command></RibbonRow>
                  <RibbonRow><Command $muted><TableIcon kind="cell" />Cell Styles<Chevron /></Command></RibbonRow>
                </Stack>
              </GroupBody>
              <GroupLabel>Styles</GroupLabel>
            </Group>
            <Group $w={147}>
              <GroupBody $pad="0 0 0 18px">
                <Stack>
                  <RibbonRow $gap={17}><Command $muted><CellsIcon kind="insert" />Insert</Command><Chevron /></RibbonRow>
                  <RibbonRow $gap={17}><Command $muted><CellsIcon kind="delete" />Delete</Command><Chevron /></RibbonRow>
                  <RibbonRow><Command><CellsIcon kind="format" />Format<Chevron /></Command></RibbonRow>
                </Stack>
              </GroupBody>
              <GroupLabel>Cells</GroupLabel>
            </Group>
          </>
        )}
        <Group $w={223}>
          <GroupBody $pad="0 14px 0 18px">
            <Stack>
              <RibbonRow><Command $muted $gap={12} aria-label="AutoSum"><Sigma /><Chevron /></Command></RibbonRow>
              <RibbonRow><Command $muted $gap={9} aria-label="Fill"><FillIcon /><Chevron /></Command></RibbonRow>
              <RibbonRow><Command $gap={9} aria-label="Clear"><Eraser /><Chevron /></Command></RibbonRow>
            </Stack>
            <BigCommand $muted $w={68}>
              <SortFilter />Sort &amp;<CaptionLine>Filter <Chevron /></CaptionLine>
            </BigCommand>
            <BigCommand $w={68}>
              <FindIcon />Find &amp;<CaptionLine>Select <Chevron /></CaptionLine>
            </BigCommand>
          </GroupBody>
          <GroupLabel>Editing</GroupLabel>
        </Group>
        <Group $w={93}>
          <GroupBody><BigCommand $muted $w={92}><AddInsIcon />Add-ins</BigCommand></GroupBody>
          <GroupLabel>Add-ins</GroupLabel>
        </Group>
        <Group $w={92}>
          <GroupBody>
            <BigCommand $muted $w={91}><AnalyzeIcon />Analyze<CaptionLine>Data</CaptionLine></BigCommand>
          </GroupBody>
        </Group>
        <CollapseButton aria-label="Collapse ribbon"><Chevron w={16} thick={1.8} /></CollapseButton>
      </Ribbon>
      <FormulaBar>
        <FormulaInput aria-label="Formula" />
        <Chevron w={16} thick={1.7} />
      </FormulaBar>
      <Workspace>
        <SheetArea>
          <SheetTop>
            {full && (
              <Sheet>
                <ColumnHeads>
                  {["O", "P", "Q", "R", "S", "T", ""].map((c) => <ColumnHead key={c}>{c}</ColumnHead>)}
                </ColumnHeads>
                <Cells>
                  <ChartFloat><ScatterChart /></ChartFloat>
                  <ChartTools>
                    <ChartTool aria-label="Chart elements"><PlusIcon /></ChartTool>
                    <ChartTool aria-label="Chart styles"><BrushIcon /></ChartTool>
                    <ChartTool aria-label="Chart filters"><FunnelIcon /></ChartTool>
                  </ChartTools>
                </Cells>
              </Sheet>
            )}
            <VTrack $w={24}>
              <Triangle dir="up" />
              <VRail $before={0} $after={6}><Thumb /></VRail>
              <Triangle dir="down" />
            </VTrack>
          </SheetTop>
          <SheetBottom>
            {full && (
              <>
                <MoreButton aria-label="Sheet options">
                  <svg width="4" height="16" fill={INK}><path d="M0 0h3v3H0zM0 6h3v3H0zM0 12h3v3H0z" /></svg>
                </MoreButton>
                <HTrack>
                  <Triangle dir="left" />
                  <HRail><Thumb /></HRail>
                  <Triangle dir="right" />
                </HTrack>
              </>
            )}
          </SheetBottom>
        </SheetArea>
        <FormatPane view={view} />
      </Workspace>
      <StatusBar>
        <ViewButton $active aria-label="Normal view"><GridView /></ViewButton>
        <ViewButton aria-label="Page layout view"><PageView /></ViewButton>
        <ViewButton aria-label="Page break preview"><BreakView /></ViewButton>
        <ZoomButton aria-label="Zoom out">
          <svg width="12" height="12" stroke={INK} strokeWidth="1.200"><path d="M0 6h12" /></svg>
        </ZoomButton>
        <ZoomSlider type="range" aria-label="Zoom" min={0} max={200} defaultValue={100} />
        <ZoomButton aria-label="Zoom in">
          <svg width="12" height="12" stroke={INK} strokeWidth="1.200"><path d="M0 6h12M6 0v12" /></svg>
        </ZoomButton>
        <ZoomValue>100%</ZoomValue>
      </StatusBar>
    </WindowBody>
  );
};

export default function App() {
  return (
    <>
      <GlobalStyle />
      <Page>
        <WindowCell $col={1}>
          <ExcelWindow view="bounds" />
          <Frame $tall />
          <DownArrow width="32" height="134">
            <path d="M16 0L22 110L27 103Q31 101 31 106L16 131L1 106Q1 101 6 103L11 110Z" fill={RED} stroke={RED} strokeLinejoin="round" />
          </DownArrow>
          <ScrollNote>Scroll</ScrollNote>
        </WindowCell>
        <WindowCell $col={3}>
          <ExcelWindow view="ticks" />
          <Frame />
        </WindowCell>
        <LongArrow width="516" height="36">
          <path d="M0 17L250 13H430L490 11L483 6Q482 0 489 2L513 16L489 31Q482 33 483 27L490 22H430L250 19L0 18Z" fill={RED} />
        </LongArrow>
      </Page>
    </>
  );
}
